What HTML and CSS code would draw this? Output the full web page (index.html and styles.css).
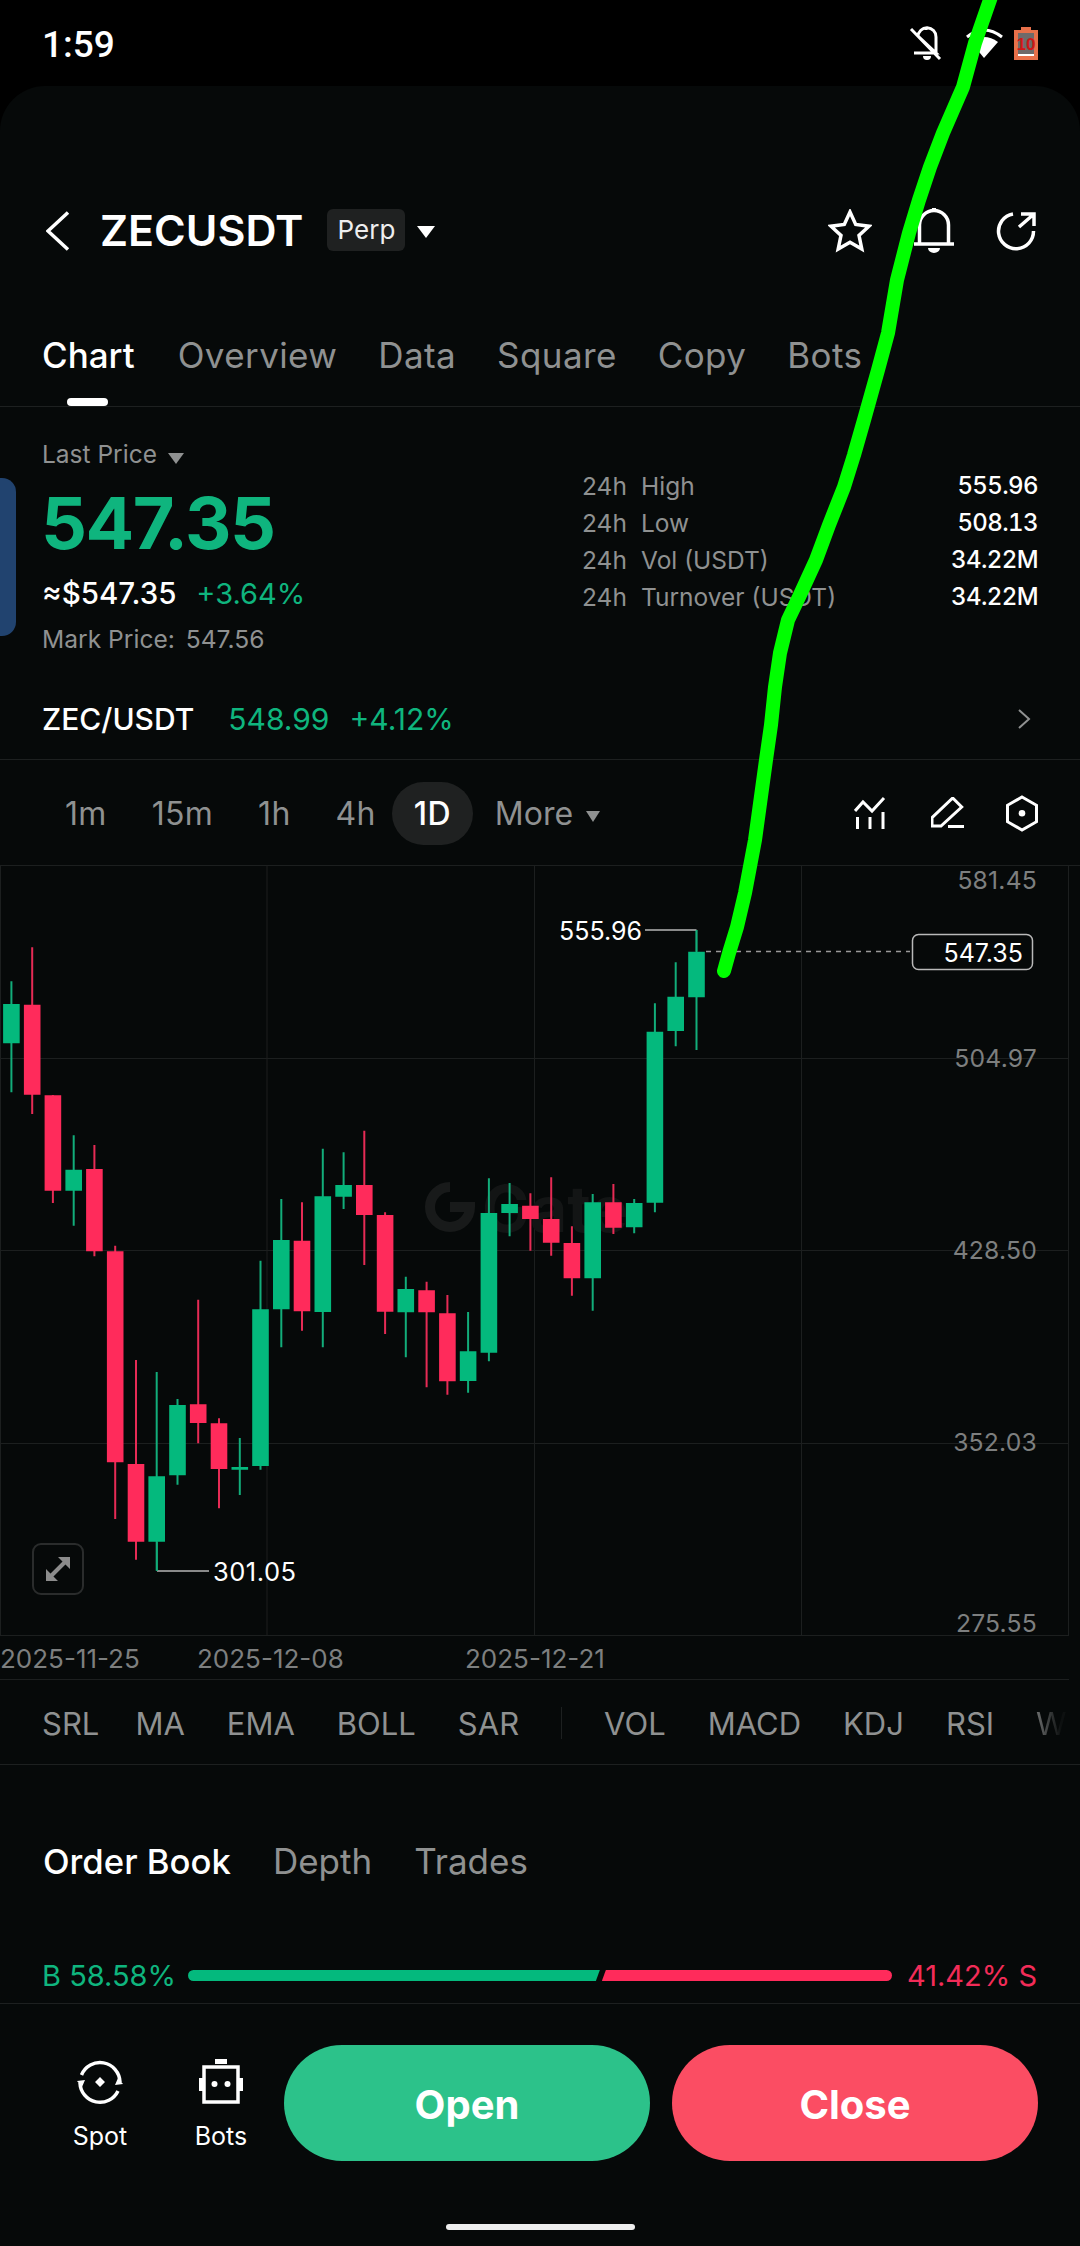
FILE: index.html
```html
<!DOCTYPE html>
<html lang="en">
<head>
<meta charset="utf-8">
<title>ZECUSDT Perp</title>
<link rel="stylesheet" href="styles.css">
</head>
<body>
<div class="status">
  <span class="clock">1:59</span>
  <svg class="status-icons" width="130" height="36" viewBox="908 26 130 36">
    <path class="ic-thin" d="M918 36.500A8.500 8.500 0 0 1 936 37V53M914 53H936L918 36M926 28V30M911 29L940 59"/>
    <path class="ic-fill" d="M923 56H931A4 4 0 0 1 923 56Z"/>
    <path class="ic-thin" d="M967 37Q984 23 1002 37"/>
    <path class="ic-fill" d="M971 42Q984 32 998 42L984 58Z"/>
    <path class="batt" d="M1021 30V27H1031V30H1038V60H1014V30Z"/>
    <rect class="batt-in" x="1018" y="33" width="16" height="21"/>
    <rect class="ic-fill" x="1018" y="54" width="16" height="2"/>
    <text class="batt-txt" x="1026" y="50">10</text>
  </svg>
</div>

<main class="screen">
  <header class="topbar">
    <svg class="back" width="24" height="40" viewBox="0 0 24 40"><path class="ic-line" d="M22 1.500L2 20L22 38.500"/></svg>
    <h1 class="symbol">ZECUSDT</h1>
    <span class="badge">Perp</span>
    <span class="caret caret-lg"></span>
    <div class="top-icons">
      <svg width="44" height="44" viewBox="0 0 44 44"><path class="ic-line" d="M22 3L27.700 15.500L41 17.200L31 26.400L33.800 40L22 33.200L10.200 40L13 26.400L3 17.200L16.300 15.500Z"/></svg>
      <svg width="40" height="46" viewBox="0 0 40 46"><path class="ic-line" d="M0 36H40M5.500 36V17A14.500 14.500 0 0 1 34.500 17V36"/><path class="ic-fill" d="M14 40H26A6 5 0 0 1 14 40ZM18 0H22V3H18Z"/></svg>
      <svg width="40" height="40" viewBox="0 0 40 40"><path class="ic-line" d="M17 3A17.500 17.500 0 1 0 37.500 20M23 16L38 3M25 3H38V15"/></svg>
    </div>
  </header>

  <nav class="tabs">
    <a class="tab tab-on">Chart</a>
    <a class="tab">Overview</a>
    <a class="tab">Data</a>
    <a class="tab">Square</a>
    <a class="tab">Copy</a>
    <a class="tab">Bots</a>
  </nav>

  <section class="summary">
    <div class="drawer"></div>
    <div class="quote">
      <div class="last">Last Price <span class="caret caret-sm"></span></div>
      <div class="price">547.35</div>
      <div class="fiat">≈$547.35 <span class="up chg">+3.64%</span></div>
      <div class="mark">Mark Price: <span class="mark-v">547.56</span></div>
    </div>
    <div class="stats">
      <div class="stat"><span class="s-h">24h</span><span class="s-l">High</span><span class="s-v">555.96</span></div>
      <div class="stat"><span class="s-h">24h</span><span class="s-l">Low</span><span class="s-v">508.13</span></div>
      <div class="stat"><span class="s-h">24h</span><span class="s-l">Vol (USDT)</span><span class="s-v">34.22M</span></div>
      <div class="stat"><span class="s-h">24h</span><span class="s-l">Turnover (USDT)</span><span class="s-v">34.22M</span></div>
    </div>
  </section>

  <section class="pair">
    <span class="pair-n">ZEC/USDT</span>
    <span class="up pair-p">548.99</span>
    <span class="up pair-c">+4.12%</span>
    <svg class="pair-go" width="14" height="20" viewBox="0 0 14 20"><path class="ic-grey" d="M2 1L12 10L2 19"/></svg>
  </section>

  <section class="frames">
    <span class="frame">1m</span>
    <span class="frame">15m</span>
    <span class="frame">1h</span>
    <span class="frame">4h</span>
    <span class="frame frame-on">1D</span>
    <span class="frame frame-more">More <span class="caret caret-md"></span></span>
    <div class="frame-icons">
      <svg class="fi-chart" width="32" height="34" viewBox="854 797 32 34"><path class="ic-thin" d="M855 812L863 803L872 812L884 799M857.500 818V830M870 818V830M883 813V830"/></svg>
      <svg width="34" height="32" viewBox="931 796 34 32"><path class="ic-thin" d="M932 825V816.700L952.700 797L961.700 806L941 825ZM948 825.500H964"/></svg>
      <svg width="34" height="37" viewBox="1005 795 34 37"><path class="ic-thin" d="M1022 797L1036.500 805.300V821.700L1022 830L1007.500 821.700V805.300Z"/><circle class="ic-fill" cx="1022" cy="813.300" r="3.300"/></svg>
    </div>
  </section>

  <section class="chart">
    <svg width="1080" height="815" viewBox="0 866 1080 815">
      <path class="grid" d="M0 866.500H1080M0 1059.500H1069M0 1251.500H1069M0 1444.500H1069M0 1636.500H1069M0 1680.500H1069M.5 866V1636M267 866V1636M534.500 866V1636M801.500 866V1636M1068.500 866V1636"/>
      <g class="mark-logo">
        <path class="logo-arc" d="M450 1188A20 20 0 1 0 470 1208H450"/>
        <text class="logo-txt" x="482" y="1233">Gate</text>
      </g>
      <path class="wick wick-up" d="M11.400 982.300V1093.300M73.700 1136.300V1226.700M156.700 1373V1571.700M177.500 1400V1485.700M239.800 1439V1496M260.500 1261.700V1470.700M281.300 1200V1348.300M322.800 1149.700V1348.300M343.600 1153.300V1210M405.800 1277.700V1358.300M468.100 1313V1393.700M488.900 1179.300V1362.300M509.600 1184V1237.300M592.700 1195V1311.700M634.200 1200V1234.300M654.900 1004.300V1213.300M675.700 963.300V1047.300M696.500 931V1051"/>
      <path class="wick wick-dn" d="M32.200 948.300V1115M52.900 1096V1204M94.400 1146V1257.300M115.200 1246.700V1520M136 1361V1560.700M198.200 1300.700V1444.300M219 1419.300V1509.300M302 1203.300V1331.700M364.300 1131.700V1266M385.100 1213.300V1335M426.600 1282.700V1388.300M447.400 1296V1395.700M530.400 1194.300V1251.700M551.200 1178.300V1256.700M571.900 1227.300V1296.700M613.400 1185V1235"/>
      <path class="body body-up" d="M11.400 1005V1044.300M73.700 1170.700V1191.700M156.700 1477.300V1542.700M177.500 1406V1476.300M239.800 1468V1470.700M260.500 1310.300V1467M281.300 1241V1310.300M322.800 1197.300V1313M343.600 1186V1197.700M405.800 1290V1313.300M468.100 1352.300V1382M488.900 1214V1353.700M509.600 1205V1214M592.700 1203.300V1279.300M634.200 1204V1228.300M654.900 1032.700V1203.700M675.700 997.700V1032M696.500 952.700V998.300"/>
      <path class="body body-dn" d="M32.200 1005.700V1095.700M52.900 1096.300V1191.700M94.400 1170V1252.300M115.200 1252.300V1463.300M136 1465V1542.700M198.200 1405.300V1424M219 1424.300V1470M302 1241.700V1312.300M364.300 1186V1216M385.100 1216V1312.700M426.600 1291.300V1313.300M447.400 1314.300V1382.300M530.400 1206.700V1220M551.200 1220V1243.700M571.900 1244V1279.300M613.400 1203.300V1228.700"/>
      <path class="lead" d="M157 1572H209M645 931H696.500"/>
      <path class="lead-up" d="M157 1543V1572M696.500 931V952"/>
      <path class="dash" d="M706 952.500H910"/>
      <text class="note" x="559" y="941">555.96</text>
      <text class="note note-wide" x="213" y="1582">301.05</text>
      <rect class="last-box" x="912.500" y="935.500" width="120" height="35" rx="6"/>
      <text class="note note-end" x="1023" y="963">547.35</text>
      <text class="axis axis-end" x="1037" y="889.500">581.45</text>
      <text class="axis axis-end" x="1037" y="1068">504.97</text>
      <text class="axis axis-end" x="1037" y="1260">428.50</text>
      <text class="axis axis-end" x="1037" y="1452">352.03</text>
      <text class="axis axis-end" x="1037" y="1633">275.55</text>
      <text class="axis axis-date" x="0" y="1669">2025-11-25</text>
      <text class="axis axis-date" x="197" y="1669">2025-12-08</text>
      <text class="axis axis-date" x="465" y="1669">2025-12-21</text>
    </svg>
    <div class="expand">
      <svg width="28" height="28" viewBox="0 0 28 28"><path class="exp-line" d="M7 21L21 7"/><path class="exp-head" d="M14 2H26V14ZM2 14V26H14Z"/></svg>
    </div>
  </section>

  <section class="indicators">
    <span class="ind ind-first">SRL</span>
    <span class="ind">MA</span>
    <span class="ind">EMA</span>
    <span class="ind">BOLL</span>
    <span class="ind">SAR</span>
    <span class="ind-sep"></span>
    <span class="ind">VOL</span>
    <span class="ind">MACD</span>
    <span class="ind">KDJ</span>
    <span class="ind">RSI</span>
    <span class="ind ind-fade">W</span>
  </section>

  <section class="book-tabs">
    <span class="book-tab book-on">Order Book</span>
    <span class="book-tab">Depth</span>
    <span class="book-tab">Trades</span>
  </section>

  <section class="depth">
    <span class="up">B 58.58%</span>
    <div class="bar">
      <div class="bar-b" style="width:58.5%"></div>
      <div class="bar-s"></div>
    </div>
    <span class="dn">41.42% S</span>
  </section>

  <footer class="actions">
    <div class="quick">
      <svg width="46" height="46" viewBox="0 0 46 46"><path class="ic-line" d="M4.500 16A20 20 0 0 1 43 23M3 24A20 20 0 0 0 41 32"/><path class="ic-fill" d="M23 18L28 23L23 28L18 23ZM0 22L8 21L5 28ZM46 25L38 26L41 19Z"/></svg>
      <span class="quick-l">Spot</span>
    </div>
    <div class="quick">
      <svg width="46" height="46" viewBox="0 0 46 46"><path class="ic-line" d="M6 8H40V43H6Z"/><path class="ic-fill" d="M17 0H29V5H17ZM1 19H5V32H1ZM41 19H45V32H41Z"/><circle class="ic-fill" cx="16.500" cy="25" r="3"/><circle class="ic-fill" cx="29.500" cy="25" r="3"/></svg>
      <span class="quick-l">Bots</span>
    </div>
    <div class="btns">
      <button class="btn btn-open">Open</button>
      <button class="btn btn-close">Close</button>
    </div>
  </footer>
  <div class="home"></div>
</main>

<svg class="scribble" width="1080" height="2246" viewBox="0 0 1080 2246">
  <polyline points="992,-6 975,43 963,87 943,133 930,167 919,200 909,233 897,280 888,333 878,370 864,420 854,455 844,487 829,525 816,560 799,597 788,620 780,653 775,687 771,725 766,760 755,840 745,893 737,927 729,953 724,971"/>
</svg>
</body>
</html>
```

FILE: styles.css
```css
* { box-sizing: border-box; }
html, body { margin: 0; padding: 0; }
body {
  position: relative;
  width: 1080px;
  height: 2246px;
  overflow: hidden;
  background: #000;
  color: #fff;
  font-family: Inter, "Liberation Sans", sans-serif;
}

svg { display: block; flex: none; }
.ic-line { fill: none; stroke: #fff; stroke-width: 3.5; }
.ic-thin { fill: none; stroke: #fff; stroke-width: 3; }
.ic-grey { fill: none; stroke: #8f9191; stroke-width: 2; }
.ic-fill { fill: #fff; }
.up { color: #0fb57e; }
.dn { color: #f22c58; }

.caret { display: inline-block; width: 0; height: 0; border-style: solid; border-color: #fff transparent transparent; }
.caret-lg { border-width: 12px 9px 0; margin-left: 12px; }
.caret-md { border-width: 11px 7.500px 0; border-top-color: #8f9191; vertical-align: 3px; margin-left: 4px; }
.caret-sm { border-width: 11px 8px 0; border-top-color: #8f9191; vertical-align: -1px; margin-left: 4px; }

/* status bar */
.status { height: 86px; padding: 2px 42px 0 42px; display: flex; align-items: center; justify-content: space-between; }
.clock { font: 500 37px Roboto, sans-serif; }
.batt { fill: #e8704a; }
.batt-in { fill: #6f6a6a; }
.batt-txt { fill: #d01616; font: 700 17px "Liberation Sans", sans-serif; text-anchor: middle; }

/* page card */
.screen { height: 2160px; background: #060909; border-radius: 45px 45px 0 0; }

.topbar { height: 214px; padding: 122px 44px 0 46px; display: flex; align-items: flex-start; }
.back { margin-top: 3px; }
.symbol { margin: 0 0 0 30px; font-size: 43px; line-height: 44px; font-weight: 600; }
.badge { margin: 1px 0 0 24px; width: 78px; height: 42px; background: #1f2121; border-radius: 6px; font-size: 26px; line-height: 42px; text-align: center; color: #eee; }
.topbar .caret { margin-top: 18px; }
.top-icons { margin-left: auto; display: flex; gap: 42px; align-items: center; }

.tabs { height: 107px; padding: 35px 42px 0; display: flex; gap: 41px; border-bottom: 1px solid #1d2020; }
.tab { position: relative; height: 71px; font-size: 35px; line-height: 40px; letter-spacing: .4px; color: #8f9191; }
.tab-on { margin-right: 2px; color: #fff; font-weight: 500; letter-spacing: 0; }
.tab-on::after { content: ""; position: absolute; left: 25px; bottom: 0; width: 41px; height: 8px; border-radius: 4px; background: #fff; }

.summary { position: relative; height: 292px; padding: 31px 42px 0 42px; display: flex; justify-content: space-between; }
.drawer { position: absolute; left: 0; top: 71px; width: 16px; height: 158px; background: #21436f; border-radius: 0 14px 14px 0; }
.last { font-size: 24.500px; line-height: 32px; color: #8f9191; }
.price { margin: 15px 0 0 -1px; font-size: 72px; line-height: 76px; font-weight: 700; letter-spacing: -1.500px; color: #0fb57e; }
.fiat { margin-top: 14px; font-size: 29.500px; line-height: 36px; font-weight: 500; }
.chg { margin-left: 12px; font-size: 29px; font-weight: 400; }
.mark { margin-top: 11px; font-size: 24.600px; line-height: 32px; color: #8f9191; }
.mark-v { margin-left: 4px; }

.stats { width: 456px; padding-top: 29px; }
.stat { display: flex; height: 37px; align-items: center; font-size: 24.500px; color: #8f9191; }
.s-h { width: 59px; }
.s-v { margin-left: auto; color: #fff; font-weight: 500; font-size: 24px; letter-spacing: -.6px; font-variant-numeric: tabular-nums; }

.pair { height: 61px; padding: 0 49px 21px 42px; display: flex; align-items: center; border-bottom: 1px solid #1d2020; font-size: 30px; }
.pair-n { font-weight: 500; }
.pair-p { margin-left: 34px; }
.pair-c { margin-left: 20px; }
.pair-go { margin-left: auto; }

.frames { height: 105px; padding: 1px 41px 0 43px; display: flex; align-items: center; gap: 1px; }
.frame { height: 63px; padding: 0 22px; font-size: 32px; line-height: 63px; letter-spacing: .3px; color: #8f9191; }
.frame-on { width: 81px; margin-left: -7px; padding: 0; text-align: center; color: #fff; font-weight: 500; background: #1f2121; border-radius: 32px; }
.frame-more { padding-left: 21px; letter-spacing: 0; }
.frame-icons { margin-left: auto; display: flex; gap: 40px; align-items: center; }
.fi-chart { margin-right: 5px; }

.chart { position: relative; height: 815px; }
.grid { fill: none; stroke: #1c1f1f; stroke-width: 1; }
.logo-arc { fill: none; stroke: #181a1a; stroke-width: 10; }
.logo-txt { fill: #131515; font-size: 64px; font-weight: 700; }
.wick { fill: none; stroke-width: 2; }
.wick-up { stroke: #12ad7a; }
.wick-dn { stroke: #e62b55; }
.body { fill: none; stroke-width: 16.600; }
.body-up { stroke: #04b97d; }
.body-dn { stroke: #ff2b5b; }
.lead { fill: none; stroke: #b5b5b5; stroke-width: 1.500; }
.lead-up { fill: none; stroke: #12ad7a; stroke-width: 1.500; }
.dash { fill: none; stroke: #9a9a9a; stroke-width: 1.500; stroke-dasharray: 5 5; }
.note { fill: #fff; font-size: 25px; }
.note-wide { font-size: 25.500px; letter-spacing: .5px; }
.note-end { text-anchor: end; }
.axis { fill: #7d7f7f; font-size: 24.700px; letter-spacing: .2px; }
.axis-end { text-anchor: end; }
.axis-date { font-size: 26px; letter-spacing: 0; }
.last-box { fill: #060909; stroke: #b9b9b9; stroke-width: 1.500; }
.exp-line { fill: none; stroke: #8c8c8c; stroke-width: 4; }
.exp-head { fill: #8c8c8c; }
.expand { position: absolute; left: 32px; top: 678px; width: 52px; height: 52px; border: 2px solid #2a2c2c; border-radius: 9px; display: flex; align-items: center; justify-content: center; }

.indicators { height: 85px; padding: 2px 0 0 42px; display: flex; align-items: center; gap: 42px; border-bottom: 1px solid #1d2020; font-size: 31px; color: #8f9191; }
.ind-first { margin-right: -6px; }
.ind-sep { width: 1px; height: 32px; background: #1d2020; }
.ind-fade { background: linear-gradient(90deg, #6d6f6f, #0d1010 80%); -webkit-background-clip: text; background-clip: text; color: transparent; }

.book-tabs { height: 116px; padding-top: 76px; padding-left: 43px; display: flex; gap: 42px; }
.book-tab { font-size: 35px; line-height: 40px; color: #8f9191; }
.book-on { font-size: 34.700px; color: #fff; font-weight: 500; }

.depth { height: 123px; padding: 0 43px 10px 42px; display: flex; align-items: flex-end; gap: 15px; font-size: 29px; line-height: 34px; border-bottom: 1px solid #1d2020; }
.bar { flex: 1; height: 11px; margin-left: -3px; margin-bottom: 12px; display: flex; gap: 2px; }
.bar-b { background: #04b97d; border-radius: 5.500px 0 0 5.500px; clip-path: polygon(0 0, 100% 0, calc(100% - 4px) 100%, 0 100%); }
.bar-s { flex: 1; background: #ff2b5b; border-radius: 0 5.500px 5.500px 0; clip-path: polygon(4px 0, 100% 0, 100% 100%, 0 100%); }

.actions { height: 158px; padding: 41px 42px 0 66px; display: flex; align-items: flex-start; }
.quick { width: 68px; margin-right: 53px; padding-top: 14px; display: flex; flex-direction: column; align-items: center; }
.quick:nth-child(2) { margin-right: 29px; }
.quick-l { margin-top: 16px; font-size: 25px; line-height: 30px; }
.btns { flex: 1; display: flex; gap: 22px; }
.btn { flex: 1; height: 116px; padding-top: 4px; border: 0; border-radius: 58px; font: 700 40px Inter, sans-serif; color: #fff; }
.btn-open { background: #2cc28a; }
.btn-close { background: #fb4d63; }

.home { width: 189px; height: 6px; margin: 62px auto 0; background: #eee; border-radius: 3px; }

.scribble { position: absolute; left: 0; top: 0; pointer-events: none; }
.scribble polyline { fill: none; stroke: #00ff00; stroke-width: 14; stroke-linecap: round; stroke-linejoin: round; }
```
